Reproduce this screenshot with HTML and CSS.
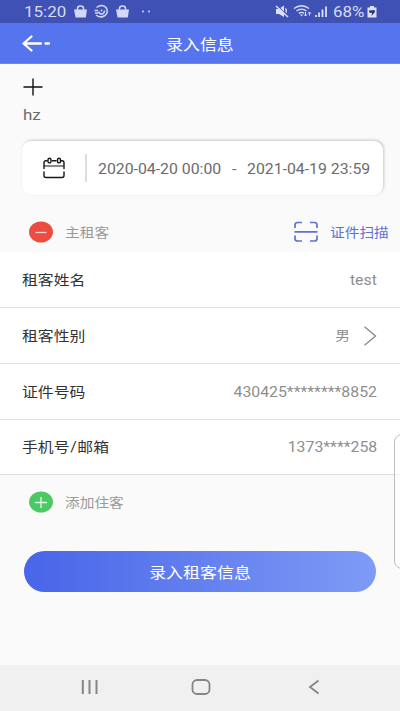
FILE: index.html
```html
<!DOCTYPE html>
<html lang="zh-CN">
<head>
<meta charset="utf-8">
<title>录入信息</title>
<link rel="stylesheet" href="styles.css">
</head>
<body>
<div class="screen">
  <div class="status">
    <span class="t clock">15:20</span>
    <svg class="status-left" width="80" height="23" viewBox="0 0 80 23">
      <g fill="#d2d8f5">
        <path d="M1 9.500H14L12.800 17.500H2.500Z"/><path d="M43 9.500H56L54.800 17.500H44.500Z"/>
        <circle cx="70" cy="11.500" r="1"/><circle cx="76" cy="11.500" r="1"/>
      </g>
      <g fill="none" stroke="#d2d8f5" stroke-width="1.500">
        <path d="M4.500 10V8.500Q4.500 6 7.500 6T10.500 8.500V10"/><path d="M46.500 10V8.500Q46.500 6 49.500 6T52.500 8.500V10"/>
        <path d="M23.500 7.500Q29 3.500 33 7.500Q36 12 32 15.500Q27 18.500 23 15"/>
        <path d="M21.500 10.500H25M22 13H25M25.500 11.500Q26.500 14.500 29 14T31.500 10.500M28.500 9.500V11.500"/>
      </g>
    </svg>
    <svg class="status-right" width="54" height="23" viewBox="0 0 54 23">
      <path fill="#dde1f8" d="M1 9H4L9 5.500V17L4 14H1Z"/>
      <path d="M2 5L13 16" stroke="#3f51b5" stroke-width="1"/>
      <path d="M1 6L13 17M10.500 8.500Q12 10 11 12.500" fill="none" stroke="#dde1f8" stroke-width="1.500"/>
      <g fill="none" stroke="#dde1f8" stroke-width="1.400">
        <path d="M19 8.500Q26.500 3 34 8.500M21.500 11Q26.500 7.200 31.500 11M23.800 13.300Q26.500 11.500 29 13.300"/>
        <path stroke-width="1" d="M30.500 12V16M29 14.500L30.500 16L32 14.500M34.500 15.500V12M33 13.500L34.500 12L36 13.500"/>
      </g>
      <path fill="#dde1f8" d="M25 14.500H28L26.500 16.500Z"/>
      <path d="M41 17V15M44 17V12.500M47.500 17V9.500M51 17V6.500" stroke="#dde1f8" stroke-width="1.800"/>
    </svg>
    <span class="t percent">68%</span>
    <svg class="battery" width="10" height="23" viewBox="0 0 10 23">
      <path fill="#dde1f8" d="M3 6H7V7.500H9.500V17.500H.5V7.500H3Z"/>
      <path fill="#26367f" d="M2 10.500L7.500 10L8 12L4.500 16L5 12.700L2.500 13Z"/>
    </svg>
  </div>

  <header class="header">
    <svg class="back" width="30" height="20" viewBox="0 0 30 20">
      <path d="M10.500 3.500L2.500 10.500L10.500 17.500M3 10.500H20M24.500 10.500H28" fill="none" stroke="#fff" stroke-width="2.300" stroke-linecap="round" stroke-linejoin="round"/>
    </svg>
    <h1 class="t title">录入信息</h1>
  </header>

  <section class="house">
    <svg class="plus" width="20" height="18" viewBox="0 0 20 18"><path d="M.5 9H19.500M10 .5V17.500" stroke="#111" stroke-width="1.400"/></svg>
    <div><span class="t house-name">hz</span></div>
  </section>

  <section class="period">
    <svg class="calendar" width="22" height="22" viewBox="0 0 22 22">
      <g fill="none" stroke="#161616" stroke-width="1.400">
        <path d="M4.500 3.700H3Q1 3.700 1 5.700V12M9 3.700H13.500M17.500 3.700H19Q21 3.700 21 5.700V12M1 14.500V18.500Q1 20.500 3 20.500H19Q21 20.500 21 18.500V14.500"/>
        <path stroke-width="1" d="M1 9H21"/>
        <rect x="5" y="1.300" width="3" height="4.600" rx="1.500"/><rect x="14.500" y="1.300" width="3" height="4.600" rx="1.500"/>
      </g>
    </svg>
    <i class="divider"></i>
    <span class="t date date-start">2020-04-20 00:00</span>
    <span class="t date date-dash">-</span>
    <span class="t date">2021-04-19 23:59</span>
  </section>

  <section class="bar tenant-bar">
    <svg class="round" width="24" height="22" viewBox="0 0 24 22"><ellipse cx="12" cy="11" rx="12" ry="10.600" fill="#ed4c40"/><path d="M6.500 11.500H17.500" stroke="#fbd3d0" stroke-width="1.300"/></svg>
    <span class="t bar-text">主租客</span>
    <div class="scan">
      <svg width="24" height="22" viewBox="0 0 24 22">
        <path d="M1 7V4Q1 1.500 3.500 1.500H8M16 1.500H20.500Q23 1.500 23 4V7M1 14.500V17.500Q1 20 3.500 20H8M16 20H20.500Q23 20 23 17.500V14.500M.5 10.800H23.500" fill="none" stroke="#5d73cf" stroke-width="1.700"/>
      </svg>
      <span class="t scan-text">证件扫描</span>
    </div>
  </section>

  <section class="form">
    <div class="row"><span class="t label">租客姓名</span><span class="t value">test</span></div>
    <div class="row"><span class="t label">租客性别</span><span class="t value gender">男</span>
      <svg class="chevron" width="14" height="20" viewBox="0 0 14 20"><path d="M1.500 .8L12.500 10L1.500 19.200" fill="none" stroke="#8b8b8b" stroke-width="1.400"/></svg>
    </div>
    <div class="row"><span class="t label">证件号码</span><span class="t value">430425********8852</span></div>
    <div class="row last"><span class="t label">手机号<span class="slash">/</span>邮箱</span><span class="t value">1373****258</span></div>
  </section>

  <section class="bar add-bar">
    <svg class="round" width="24" height="22" viewBox="0 0 24 22"><ellipse cx="12" cy="11" rx="12" ry="10.600" fill="#4bc964"/><path d="M6 11.500H18M12 6V17" stroke="#e4f8e7" stroke-width="1.300"/></svg>
    <span class="t bar-text">添加住客</span>
  </section>

  <button class="submit"><span class="t">录入租客信息</span></button>

  <nav class="nav">
    <svg width="18" height="16" viewBox="0 0 18 16"><path d="M1.800 1V15M8.500 1V15M15.500 1V15" stroke="#858585" stroke-width="2"/></svg>
    <svg class="home" width="20" height="16" viewBox="0 0 20 16"><rect x="1.500" y="1" width="17" height="14" rx="4.500" fill="none" stroke="#858585" stroke-width="1.800"/></svg>
    <svg width="12" height="16" viewBox="0 0 12 16"><path d="M10.500 1.500L2 8L10.500 14.500" fill="none" stroke="#858585" stroke-width="1.800"/></svg>
  </nav>
  <div class="edge-handle"></div>
</div>
</body>
</html>
```
FILE: styles.css
```css
* { box-sizing: border-box; }
body {
  margin: 0;
  font-family: Roboto, "Noto Sans CJK SC", sans-serif;
  background: #fafafa;
}
svg { display: block; flex: none; }

.screen {
  position: relative;
  display: flex;
  flex-direction: column;
  width: 400px;
  height: 711px;
  overflow: hidden;
}

/* Type is drawn slightly wide throughout the interface. */
.t {
  display: inline-block;
  flex: none;
  white-space: nowrap;
  transform: scaleX(1.13);
  transform-origin: left center;
}

.status {
  display: flex;
  align-items: center;
  flex: none;
  height: 23px;
  padding-left: 24px;
  background: #3f51b5;
  color: #d6dbf5;
  font-size: 15px;
}
.clock { width: 49px; padding-top: 1px; }
.status-right { margin-left: 122px; }
.percent { width: 33px; margin-left: 4px; padding-top: 1px; }
.battery { margin-left: 1px; }

.header {
  display: flex;
  align-items: center;
  flex: none;
  height: 41px;
  padding-left: 21px;
  background: #5674ee;
  border-bottom: 1px solid #6f86dc;
  color: #fff;
}
.title {
  width: 60px;
  margin: 0 0 0 115px;
  font-size: 15px;
  font-weight: 400;
}

.house {
  flex: none;
  height: 77px;
  padding: 14px 0 0 23px;
  color: #6c6c6c;
  font-size: 15px;
}
.house-name { line-height: 20px; margin-top: 9px; }

.period {
  display: flex;
  align-items: center;
  flex: none;
  width: 361px;
  height: 54px;
  margin-left: 22px;
  padding-left: 21px;
  border-radius: 9px;
  background: #fff;
  box-shadow: 1px -1px 3px rgba(0, 0, 0, .2);
  color: #6c6c6c;
  font-size: 14px;
}
.date { padding-top: 1px; }
.divider { width: 2px; height: 28px; margin: 0 11px 0 20px; background: #dedede; }
.date-start { width: 134px; }
.date-dash { width: 15px; }

.bar {
  display: flex;
  align-items: center;
  flex: none;
  padding-left: 29px;
  color: #999;
  font-size: 13px;
}
.tenant-bar { height: 57px; padding-top: 17px; }
.bar-text { margin-left: 12px; padding-bottom: 2px; }
.scan {
  display: flex;
  align-items: center;
  margin-left: auto;
  padding-right: 18px;
  color: #5d73cf;
}
.scan-text { margin-left: 12px; padding-bottom: 2px; }

.form { flex: none; background: #fff; }
.row {
  display: flex;
  align-items: center;
  height: 56px;
  padding: 0 23px 0 22px;
  border-bottom: 1px solid #dedede;
  font-size: 14px;
}
.last { height: 55px; }
.label { padding-bottom: 2px; color: #333; }
.slash { margin: 0 .6px; }
.value { margin-left: auto; color: #8e8e8e; transform-origin: right center; }
.gender { padding-bottom: 2px; font-size: 13px; }
.chevron { margin-left: 13px; }

.add-bar { height: 54px; }

.submit {
  flex: none;
  width: 352px;
  height: 41px;
  margin: 22px 0 0 24px;
  padding: 0;
  border: 0;
  border-radius: 21px;
  background: linear-gradient(90deg, #4965e9, #7e9bf6);
  color: #fff;
  font: 15px Roboto, "Noto Sans CJK SC", sans-serif;
}
.submit .t { transform-origin: center; }

.nav {
  display: flex;
  align-items: center;
  justify-content: space-between;
  height: 46px;
  margin-top: auto;
  padding: 0 80px 2px 81px;
  background: #f0f0f0;
}
.home { margin-right: 5px; }

.edge-handle {
  position: absolute;
  top: 434px;
  right: -10px;
  width: 16px;
  height: 135px;
  border: 1px solid #bdbdbd;
  border-radius: 8px;
  background: rgba(255, 255, 255, .6);
}
```
